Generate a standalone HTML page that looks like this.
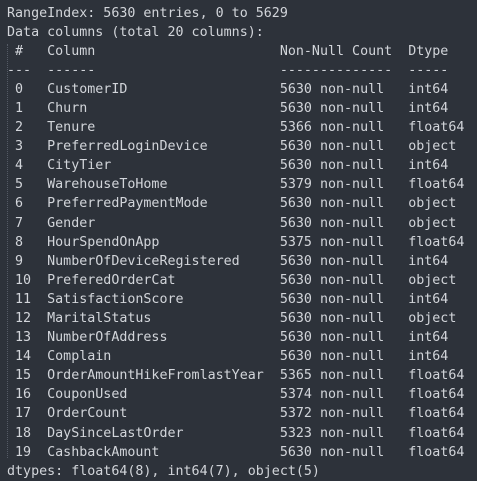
<!DOCTYPE html>
<html><head><style>
html,body{margin:0;padding:0;background:#2d323a;width:477px;height:468px;overflow:hidden}
pre{margin:0;position:absolute;left:7px;top:3.5px;font-family:"DejaVu Sans Mono","Liberation Mono",monospace;font-size:13.33px;line-height:19.1px;color:#d2d5da;white-space:pre}
.g{position:absolute;left:7px;top:44px;height:414px;border-left:1px dotted #555b66}
</style></head><body>
<div class="g"></div>
<pre>RangeIndex: 5630 entries, 0 to 5629
Data columns (total 20 columns):
 #   Column                       Non-Null Count  Dtype  
---  ------                       --------------  -----  
 0   CustomerID                   5630 non-null   int64  
 1   Churn                        5630 non-null   int64  
 2   Tenure                       5366 non-null   float64
 3   PreferredLoginDevice         5630 non-null   object 
 4   CityTier                     5630 non-null   int64  
 5   WarehouseToHome              5379 non-null   float64
 6   PreferredPaymentMode         5630 non-null   object 
 7   Gender                       5630 non-null   object 
 8   HourSpendOnApp               5375 non-null   float64
 9   NumberOfDeviceRegistered     5630 non-null   int64  
 10  PreferedOrderCat             5630 non-null   object 
 11  SatisfactionScore            5630 non-null   int64  
 12  MaritalStatus                5630 non-null   object 
 13  NumberOfAddress              5630 non-null   int64  
 14  Complain                     5630 non-null   int64  
 15  OrderAmountHikeFromlastYear  5365 non-null   float64
 16  CouponUsed                   5374 non-null   float64
 17  OrderCount                   5372 non-null   float64
 18  DaySinceLastOrder            5323 non-null   float64
 19  CashbackAmount               5630 non-null   float64
dtypes: float64(8), int64(7), object(5)</pre>
</body></html>
